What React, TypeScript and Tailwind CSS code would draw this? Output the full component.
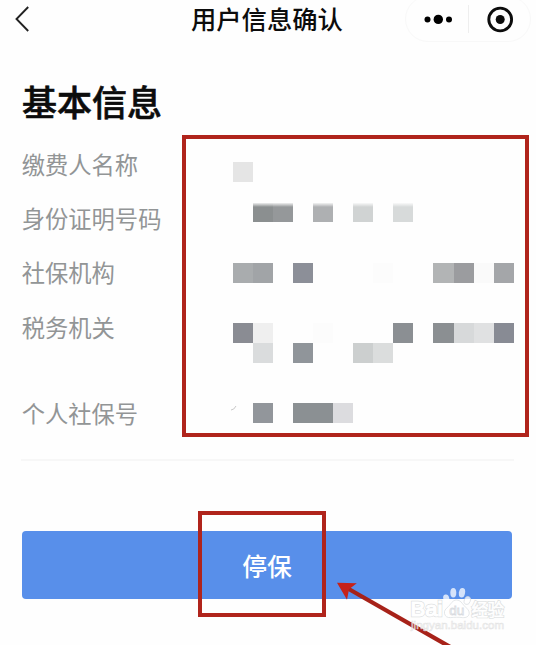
type Cell = string | null;

const rows: { label: string; height: string; offset: string; faded?: boolean; tall: string; values: Cell[][] }[] = [
  {
    label: "缴费人名称",
    height: "h-[54px]",
    offset: "pt-[26px]",
    tall: "h-5",
    values: [["bg-[#e5e5e5]"]],
  },
  {
    label: "身份证明号码",
    height: "h-[54px]",
    offset: "pt-[13px]",
    faded: true,
    tall: "h-[19px]",
    values: [[null, "bg-[#8b8f90]", "bg-[#95989a]", null, "bg-[#aeb0b2]", null, "bg-[#d0d3d3]", null, "bg-[#d7dada]"]],
  },
  {
    label: "社保机构",
    height: "h-[55px]",
    offset: "pt-[18.5px]",
    tall: "h-5",
    values: [["bg-[#a9acae]", "bg-[#a1a4a7]", null, "bg-[#8c8f98]", null, null, null, "bg-[#fcfcfc]", null, null, "bg-[#b2b4b5]", "bg-[#9b9c9f]", "bg-[#fafafa]", "bg-[#a4a6a9]"]],
  },
  {
    label: "税务机关",
    height: "h-[86px]",
    offset: "pt-[23.5px]",
    tall: "h-5",
    values: [
      ["bg-[#8a8c93]", "bg-[#efefef]", null, null, "bg-[#fcfcfc]", null, null, null, "bg-[#8b8f93]", null, "bg-[#8b8f92]", "bg-[#d7d9da]", "bg-[#e0e1e2]", "bg-[#888b94]"],
      [null, "bg-[#dadcdd]", null, "bg-[#90959a]", null, null, "bg-[#cccfcf]", "bg-[#dbdddd]"],
    ],
  },
  {
    label: "个人社保号",
    height: "h-[73px]",
    offset: "pt-[17.5px]",
    tall: "h-5",
    values: [[null, "bg-[#92969b]", null, "bg-[#8b9093]", "bg-[#8b9093]", "bg-[#dcdcdf]"]],
  },
];

function Capsule() {
  return (
    <div className="-mt-[4px] flex h-[46px] w-[126px] items-center rounded-full border border-[#f8f8f8] pr-px">
      <svg className="w-[62px]" height="12" viewBox="0 0 62 12">
        <circle cx="21.5" cy="6.4" r="3" />
        <circle cx="32.3" cy="6.4" r="4.7" />
        <circle cx="43" cy="6.4" r="3" />
      </svg>
      <div className="h-7 w-px bg-[#eeeeee]" />
      <svg className="ml-[18px]" width="27" height="27" viewBox="0 0 27 27">
        <circle cx="13.2" cy="13.5" r="11.4" fill="none" stroke="#0c0c0c" strokeWidth="2.9" />
        <circle cx="13.2" cy="13.5" r="4.5" fill="#0c0c0c" />
      </svg>
    </div>
  );
}

function Watermark() {
  return (
    <svg className="absolute left-[405px] top-[580px]" width="115" height="60" viewBox="0 0 115 60" fontFamily="'Liberation Sans', 'Noto Sans CJK SC', sans-serif">
      <g fill="#ffffff" fillOpacity="0.75" stroke="#d9dce0" strokeWidth="0.7">
        <ellipse cx="41.3" cy="18.5" rx="3" ry="4.1" stroke="none" transform="rotate(-15 41.3 18.5)" />
        <ellipse cx="48.3" cy="12.7" rx="3" ry="4.8" stroke="none" />
        <ellipse cx="57" cy="12.7" rx="3.1" ry="4.8" stroke="none" transform="rotate(10 57 12.7)" />
        <ellipse cx="62.3" cy="20.5" rx="3" ry="4.1" transform="rotate(20 62.3 20.5)" />
        <path d="M51.5 20c-4 0-5.4 4-8.1 6.5-3.1 2.8-4.4 4.2-3.9 7 .5 3.1 3.1 4.3 6 4.1 4-.3 7.5-.6 12 0 3.5.3 6.5-1 6.7-4.3.2-3.2-2.5-4.9-5.1-7.7C56.7 23 55.5 20 51.5 20z" />
        <text x="5.5" y="36.3" fontSize="21" textLength="32" lengthAdjust="spacingAndGlyphs" stroke="#dcdee0" strokeWidth="2.4">Bai</text>
        <text x="5.5" y="36.3" fontSize="21" textLength="32" lengthAdjust="spacingAndGlyphs" stroke="#ffffff" strokeWidth="1.2" fillOpacity="1">Bai</text>
        <text x="44.3" y="34.8" fontSize="13.5" textLength="15" stroke="#d8dbdf" strokeWidth="0.8">du</text>
        <text x="66.5" y="36" fontSize="16.5" textLength="32.5" stroke="#dcdee0" strokeWidth="2">经验</text>
        <text x="66.5" y="36" fontSize="16.5" textLength="32.5" stroke="#ffffff" strokeWidth="0.6" fillOpacity="1">经验</text>
      </g>
      <text x="6" y="48.8" fontSize="11" fill="#ffffff" fillOpacity="0.6" stroke="#dddddd" strokeOpacity="0.8" strokeWidth="0.6" textLength="93" lengthAdjust="spacingAndGlyphs">jingyan.baidu.com</text>
    </svg>
  );
}

export default function App() {
  return (
    <main className="relative h-[645px] w-[536px] overflow-hidden bg-[#fefefe] font-['Noto_Sans_CJK_SC',sans-serif] text-[#0c0c0c]">
      <header className="flex h-[65px] items-start">
        <svg className="ml-[14px] mt-[5px] w-[20px]" height="28" viewBox="0 0 20 28" fill="none" stroke="#222" strokeWidth="1.9">
          <path d="M14.2 2 2.5 14 14.2 26" />
        </svg>
        <h1 className="ml-[157px] w-[214px] whitespace-nowrap text-[25.3px] font-medium leading-[37px]">用户信息确认</h1>
        <Capsule />
      </header>

      <h2 className="pl-[22px] text-[35px] font-medium leading-[71px] [-webkit-text-stroke:0.6px_#0c0c0c]">基本信息</h2>

      <dl className="ml-[21px] mr-[22px] h-[325px] border-b-2 border-[#f7f7f7]">
        {rows.map((row) => (
          <div key={row.label} className={`flex ${row.height}`}>
            <dt className="w-[211.5px] shrink-0 whitespace-nowrap pl-[0.7px] pt-[11px] text-[23.3px] leading-[34px] text-[#929596]">{row.label}</dt>
            <dd className={row.offset}>
              {row.values.map((line, i) => (
                <div key={i} className="flex">
                  {line.map((cell, j) => (
                    <span key={j} className={`w-[20.1px] ${row.tall} ${cell ?? ""}`}>
                      {row.faded && cell && <span className="block h-1 bg-gradient-to-b from-white/85 to-transparent" />}
                    </span>
                  ))}
                </div>
              ))}
            </dd>
          </div>
        ))}
      </dl>

      <button className="ml-[22px] mt-[70px] block h-[68px] w-[490px] rounded-[4px] bg-[#588fea] text-[24.8px] font-medium text-white">
        <span className="relative top-[1px]">停保</span>
      </button>

      <div className="absolute left-[181.5px] top-[134.5px] h-[302.5px] w-[347.5px] border-4 border-[#b0241c]" />
      <div className="absolute left-[198px] top-[511px] h-[106px] w-[128px] border-4 border-[#b0241c]" />

      <svg className="absolute left-[330px] top-[575px]" width="130" height="70" viewBox="0 0 130 70">
        <path d="M17 13 122 73" stroke="#a72219" strokeWidth="4.3" />
        <path d="M7 7.8 26.8 8.2 19 14.2 17 24.8z" fill="#c62118" />
      </svg>
      <svg className="absolute left-[229px] top-[404px]" width="10" height="8" viewBox="0 0 10 8" fill="none" stroke="#c8c8c8">
        <path d="M2 6q3 0 5-4" />
      </svg>
      <Watermark />
    </main>
  );
}
